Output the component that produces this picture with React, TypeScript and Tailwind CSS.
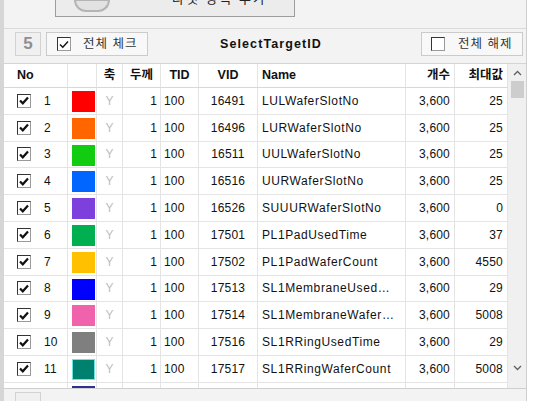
import React from 'react';

const font = { fontFamily: '"Liberation Sans", "Noto Sans CJK KR", sans-serif' };

interface Row {
  no: number;
  color: string;
  vid: number;
  name: string;
  max: string;
  ring?: boolean;
}

const rows: Row[] = [
  { no: 1, color: '#ff0000', vid: 16491, name: 'LULWaferSlotNo', max: '25' },
  { no: 2, color: '#ff6600', vid: 16496, name: 'LURWaferSlotNo', max: '25' },
  { no: 3, color: '#11cc11', vid: 16511, name: 'UULWaferSlotNo', max: '25' },
  { no: 4, color: '#0066ff', vid: 16516, name: 'UURWaferSlotNo', max: '25' },
  { no: 5, color: '#7d40dc', vid: 16526, name: 'SUUURWaferSlotNo', max: '0' },
  { no: 6, color: '#00b050', vid: 17501, name: 'PL1PadUsedTime', max: '37' },
  { no: 7, color: '#ffc000', vid: 17502, name: 'PL1PadWaferCount', max: '4550' },
  { no: 8, color: '#0000ff', vid: 17513, name: 'SL1MembraneUsedTime', max: '29' },
  { no: 9, color: '#f062ac', vid: 17514, name: 'SL1MembraneWaferCount', max: '5008' },
  { no: 10, color: '#7f7f7f', vid: 17516, name: 'SL1RRingUsedTime', max: '29' },
  { no: 11, color: '#00806f', vid: 17517, name: 'SL1RRingWaferCount', max: '5008', ring: true },
  { no: 12, color: '#2e3192', vid: 17518, name: 'SL1RRingLimit', max: '100' },
];

const CheckMark = ({ checked, thin }: { checked: boolean; thin?: boolean }) => (
  <div className="flex h-[14px] w-[14px] items-center justify-center border border-t-[#333] border-l-[#333] border-b-[#9a9a9a] border-r-[#9a9a9a] bg-white">
    {checked && (
      <svg width="10" height="9" viewBox="0 0 10 9">
        <path d="M1 4.5 L3.8 7.3 L9 1.5" fill="none" stroke="#111" strokeWidth={thin ? 1.4 : 2.2} />
      </svg>
    )}
  </div>
);

const cols = {
  no: 'w-[64px]',
  color: 'w-[29px]',
  axis: 'w-[26px]',
  thick: 'w-[38px]',
  tid: 'w-[38px]',
  vid: 'w-[59px]',
  name: 'w-[148px]',
  count: 'w-[49px]',
  max: 'w-[53px]',
};

const cell = 'shrink-0 border-r border-[#e4e4e4] flex items-center overflow-hidden';

const App = () => {
  return (
    <div className="flex h-[401px] w-[536px] overflow-hidden bg-white text-[12px] text-[#111]" style={font}>
      <div className="w-[4px] shrink-0 bg-[#d6d6d6]" />
      <div className="flex w-[523px] shrink-0 flex-col border-r border-[#cfcfcf] bg-[#f3f3f3]">
        {/* top cut button */}
        <div className="h-[29px] shrink-0 overflow-hidden border-b border-[#dadada]">
          <div className="ml-[51px] -mt-[14px] flex h-[31px] w-[240px] items-start border border-[#9c9c9c] bg-[#ececec] px-[18px]">
            <div className="mt-[12px] h-[13px] w-[36px] rounded-b-[12px] border-2 border-[#b5b5b5] bg-[#e2e2e2]" />
            <span className="ml-[62px] mt-[4px] text-[13px] leading-[16px] tracking-[2px] text-[#222]">타겟 항목 추가</span>
          </div>
        </div>

        {/* toolbar */}
        <div className="flex h-[34px] shrink-0 items-start pt-[3px]">
          <div className="ml-[11px] flex h-[24px] w-[26px] items-center justify-center border border-[#d2d2d2] bg-[#f0f0f0] text-[17px] font-bold text-[#8f8f8f]">
            5
          </div>
          <button className="ml-[5px] flex h-[24px] w-[102px] items-center border border-[#cbcbcb] bg-[#f8f8f8] pl-[10px]">
            <CheckMark checked thin />
            <span className="ml-[12px] text-[12.5px] tracking-[1px] text-[#333]">전체 체크</span>
          </button>
          <div className="ml-[64px] w-[118px] text-center text-[12.5px] font-bold leading-[24px] tracking-[1.1px]">
            SelectTargetID
          </div>
          <button className="ml-[91px] flex h-[24px] w-[102px] items-center border border-[#cbcbcb] bg-[#f8f8f8] pl-[9px]">
            <CheckMark checked={false} />
            <span className="ml-[13px] text-[12.5px] tracking-[1px] text-[#333]">전체 해제</span>
          </button>
        </div>

        {/* table */}
        <div className="flex h-[325px] shrink-0 overflow-hidden border-t border-[#d4d4d4] bg-white">
          <div className="flex w-[504px] shrink-0 flex-col">
            <div className="flex h-[24px] shrink-0 border-b border-[#d8d8d8] font-bold text-[12.5px]">
              <div className={`${cell} ${cols.no} pl-[13px]`}>No</div>
              <div className={`${cell} ${cols.color}`} />
              <div className={`${cell} ${cols.axis} justify-center`}>축</div>
              <div className={`${cell} ${cols.thick} justify-center`}>두께</div>
              <div className={`${cell} ${cols.tid} justify-center`}>TID</div>
              <div className={`${cell} ${cols.vid} justify-center`}>VID</div>
              <div className={`${cell} ${cols.name} pl-[4px]`}>Name</div>
              <div className={`${cell} ${cols.count} justify-end pr-[4px]`}>개수</div>
              <div className={`${cell} ${cols.max} justify-end pr-[4px]`}>최대값</div>
            </div>
            {rows.map((r) => (
              <div key={r.no} className="flex h-[26.8px] shrink-0 border-b border-[#e4e4e4] tracking-[0.2px]">
                <div className={`${cell} ${cols.no} pl-[13px]`}>
                  <CheckMark checked />
                  <span className="ml-[13px]">{r.no}</span>
                </div>
                <div className={`${cell} ${cols.color} items-start pl-[4px] pt-[3px]`}>
                  <div
                    className={`h-[21px] w-[23px] ${r.ring ? 'border border-[#6fe3e3]' : ''}`}
                    style={{ backgroundColor: r.color }}
                  />
                </div>
                <div className={`${cell} ${cols.axis} justify-center text-[#bdbdbd]`}>Y</div>
                <div className={`${cell} ${cols.thick} justify-end pr-[3px]`}>1</div>
                <div className={`${cell} ${cols.tid} pl-[3px]`}>100</div>
                <div className={`${cell} ${cols.vid} justify-center`}>{r.vid}</div>
                <div className={`${cell} ${cols.name} pl-[4px] pr-[10px]`}>
                  <span className="overflow-hidden text-ellipsis whitespace-nowrap tracking-[0.6px]">{r.name}</span>
                </div>
                <div className={`${cell} ${cols.count} justify-end pr-[4px]`}>3,600</div>
                <div className={`${cell} ${cols.max} justify-end pr-[4px]`}>{r.max}</div>
              </div>
            ))}
          </div>
          {/* scrollbar */}
          <div className="flex w-[19px] shrink-0 flex-col bg-[#f0f0f0]">
            <div className="flex h-[17px] items-center justify-center">
              <svg width="9" height="6" viewBox="0 0 9 6">
                <path d="M1 5 L4.5 1.5 L8 5" fill="none" stroke="#606060" strokeWidth="1.3" />
              </svg>
            </div>
            <div className="mx-[3px] h-[17px] bg-[#cdcdcd]" />
            <div className="flex-1" />
            <div className="mb-[12px] flex h-[17px] items-center justify-center">
              <svg width="9" height="6" viewBox="0 0 9 6">
                <path d="M1 1 L4.5 4.5 L8 1" fill="none" stroke="#606060" strokeWidth="1.3" />
              </svg>
            </div>
          </div>
        </div>

        {/* bottom bar */}
        <div className="flex-1 border-t border-[#cfcfcf] pt-[3px]">
          <div className="ml-[11px] h-[24px] w-[26px] border border-[#d2d2d2] bg-[#f0f0f0]" />
        </div>
      </div>
    </div>
  );
};

export default App;
